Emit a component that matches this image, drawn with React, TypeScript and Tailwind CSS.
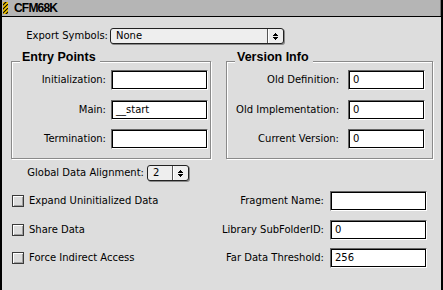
import React from "react";

function Stripes() {
  return (
    <svg width="5" height="12" viewBox="0 0 5 12" className="block">
      <rect width="5" height="12" fill="#000" />
      {[-8, -4, 0, 4, 8, 12].map((y) => (
        <line key={y} x1={-1} y1={y + 6} x2={6} y2={y - 1} stroke="#f2c500" strokeWidth="1.6" />
      ))}
    </svg>
  );
}

function Arrows() {
  return (
    <svg width="5" height="7" viewBox="0 0 5 7" shapeRendering="crispEdges" className="block">
      <rect x="2" y="0" width="1" height="1" fill="#000" />
      <rect x="1" y="1" width="3" height="1" fill="#000" />
      <rect x="0" y="2" width="5" height="1" fill="#000" />
      <rect x="0" y="4" width="5" height="1" fill="#000" />
      <rect x="1" y="5" width="3" height="1" fill="#000" />
      <rect x="2" y="6" width="1" height="1" fill="#000" />
    </svg>
  );
}

function Popup({ value, className }: { value: string; className: string }) {
  return (
    <div
      className={`flex h-[16px] rounded-[3px] border border-[#222] bg-[#eeeeee] shadow-[1px_1px_0_#8a8a8a] ${className}`}
    >
      <div className="flex flex-1 items-center pl-[5px]">{value}</div>
      <div className="flex w-[16px] items-center justify-center border-l border-[#555] shadow-[inset_1px_0_0_#fff]">
        <Arrows />
      </div>
    </div>
  );
}

function Field({ value, className }: { value?: string; className: string }) {
  return (
    <div
      className={`h-[20px] shrink-0 border border-t-[#666] border-l-[#666] border-b-white border-r-white ${className}`}
    >
      <div className="flex h-full items-center border border-black bg-white pl-[3px]">{value}</div>
    </div>
  );
}

function Checkbox() {
  return (
    <div className="h-[12px] w-[12px] shrink-0 border border-[#3a3a3a] bg-[#dcdcdc] shadow-[inset_1px_1px_0_#fff,inset_-1px_-1px_0_#a0a0a0]" />
  );
}

function FieldRow({
  label,
  value,
  labelW,
  fieldW,
  gap,
  mt,
}: {
  label: string;
  value?: string;
  labelW: string;
  fieldW: string;
  gap: string;
  mt: string;
}) {
  return (
    <div className={`flex h-[20px] items-center ${mt}`}>
      <div className={`${labelW} shrink-0 text-right`}>{label}</div>
      <Field value={value} className={`${gap} ${fieldW}`} />
    </div>
  );
}

function Group({ title, className, children }: { title: string; className: string; children: React.ReactNode }) {
  return (
    <div
      className={`relative h-[98px] shrink-0 border border-[#8a8a8a] shadow-[inset_1px_1px_0_#fff,1px_1px_0_#fff] ${className}`}
    >
      <div className="absolute left-[8px] top-[-12px] bg-[#dddddd] px-[2px] pr-[4px] font-['Liberation_Sans',sans-serif] text-[12.5px] font-bold leading-[14px]">
        {title}
      </div>
      {children}
    </div>
  );
}

function CheckRow({
  label,
  rightLabel,
  value,
  mt,
}: {
  label: string;
  rightLabel: string;
  value?: string;
  mt: string;
}) {
  return (
    <div className={`flex h-[20px] items-center ${mt}`}>
      <div className="ml-[10px] flex flex-1 items-center">
        <Checkbox />
        <span className="ml-[5px]">{label}</span>
      </div>
      <div className="shrink-0 text-right">{rightLabel}</div>
      <Field value={value} className="ml-[6px] mr-[14px] w-[97px]" />
    </div>
  );
}

export default function App() {
  return (
    <div className="flex h-[290px] w-[443px] flex-col overflow-hidden border-l-2 border-r-2 border-black bg-[#dddddd] font-['DejaVu_Sans',sans-serif] text-[10px] leading-none text-black">
      <div className="flex h-[17px] shrink-0 items-center border-b border-black bg-[#b5b5b5] shadow-[inset_-1px_0_0_#777]">
        <div className="ml-[1px]">
          <Stripes />
        </div>
        <span className="ml-[6px] font-['Liberation_Sans',sans-serif] text-[12px] font-bold tracking-[-0.8px]">
          CFM68K
        </span>
      </div>

      <div className="mt-[11px] flex h-[16px] items-center">
        <div className="w-[106px] shrink-0 text-right">Export Symbols:</div>
        <Popup value="None" className="ml-[2px] w-[174px]" />
      </div>

      <div className="ml-[9px] mt-[17px] flex">
        <Group title="Entry Points" className="w-[200px]">
          <div className="flex flex-col pt-[8px]">
            <FieldRow label="Initialization:" labelW="w-[94px]" gap="ml-[5px]" fieldW="w-[97px]" mt="mt-0" />
            <FieldRow label="Main:" value="__start" labelW="w-[94px]" gap="ml-[5px]" fieldW="w-[97px]" mt="mt-[10px]" />
            <FieldRow label="Termination:" labelW="w-[94px]" gap="ml-[5px]" fieldW="w-[97px]" mt="mt-[9px]" />
          </div>
        </Group>
        <Group title="Version Info" className="ml-[15px] w-[207px]">
          <div className="flex flex-col pt-[8px]">
            <FieldRow label="Old Definition:" value="0" labelW="w-[112px]" gap="ml-[9px]" fieldW="w-[77px]" mt="mt-0" />
            <FieldRow label="Old Implementation:" value="0" labelW="w-[112px]" gap="ml-[9px]" fieldW="w-[77px]" mt="mt-[10px]" />
            <FieldRow label="Current Version:" value="0" labelW="w-[112px]" gap="ml-[9px]" fieldW="w-[77px]" mt="mt-[9px]" />
          </div>
        </Group>
      </div>

      <div className="mt-[6px] flex h-[16px] items-center">
        <div className="w-[142px] shrink-0 text-right">Global Data Alignment:</div>
        <Popup value="2" className="ml-[3px] w-[42px]" />
      </div>

      <CheckRow label="Expand Uninitialized Data" rightLabel="Fragment Name:" mt="mt-[10px]" />
      <CheckRow label="Share Data" rightLabel="Library SubFolderID:" value="0" mt="mt-[9px]" />
      <CheckRow label="Force Indirect Access" rightLabel="Far Data Threshold:" value="256" mt="mt-[8px]" />
    </div>
  );
}
